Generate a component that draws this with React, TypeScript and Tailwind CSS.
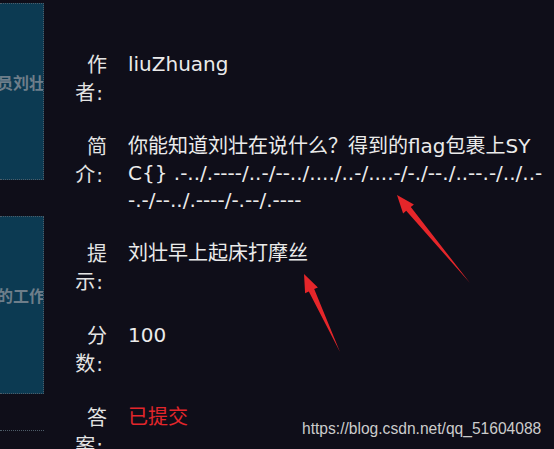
import React from 'react';

interface InfoRow {
  label: [string, string];
  lines: string[];
  danger?: boolean;
}

const rows: InfoRow[] = [
  { label: ['作', '者'], lines: ['liuZhuang'] },
  {
    label: ['简', '介'],
    lines: [
      '你能知道刘壮在说什么？得到的flag包裹上SY',
      'C{} .-../.----/..-/--../..../..-/....-/-./--./..--.-/../..-',
      '-.-/--../.----/-.--/.----',
    ],
  },
  { label: ['提', '示'], lines: ['刘壮早上起床打摩丝'] },
  { label: ['分', '数'], lines: ['100'] },
  { label: ['答', '案'], lines: ['已提交'], danger: true },
];

const SideCard = ({ title, className }: { title: string; className: string }) => (
  <div className={`overflow-hidden bg-[#0c3a52] border-t border-r border-b border-dotted border-[#4d5c68] ${className}`}>
    <div className="pt-[70px] -ml-[3px] whitespace-nowrap text-[16px] leading-[20px] font-bold text-[#6e7e8a]">
      {title}
    </div>
  </div>
);

export default function App() {
  return (
    <div
      className="relative w-[554px] h-[449px] overflow-hidden bg-[#0f0e19] flex"
      style={{ fontFamily: '"DejaVu Sans", "Noto Sans CJK SC", sans-serif' }}
    >
      {/* left list of challenge cards, clipped by the panel */}
      <div className="w-[44px] shrink-0 flex flex-col">
        <SideCard title="员刘壮的日记" className="mt-[3px] h-[177px]" />
        <SideCard title="的工作日志" className="mt-[36px] h-[178px]" />
        <div className="mt-[36px] flex-1 border-t border-dotted border-[#4d5c68]" />
      </div>

      {/* challenge detail */}
      <div className="flex-1 pl-[27px] pt-[51px]">
        <div className="grid grid-cols-[36px_1fr] gap-x-[21px] gap-y-[26px]">
          {rows.map((row) => (
            <React.Fragment key={row.label.join('')}>
              <div className="flex flex-col items-end text-[20px] leading-[28px] text-[#e4e4e4]">
                <span>{row.label[0]}</span>
                <span className="pr-[4px]">
                  {row.label[1]}
                  <span className="ml-[1px]">:</span>
                </span>
              </div>
              <div
                className={`flex flex-col text-[20px] leading-[27px] whitespace-nowrap ${
                  row.danger ? 'text-[#e3262b]' : 'text-[#ebebeb]'
                }`}
              >
                {row.lines.map((line) => (
                  <span key={line}>{line}</span>
                ))}
              </div>
            </React.Fragment>
          ))}
        </div>
      </div>

      {/* red annotation arrows */}
      <svg className="absolute inset-0 pointer-events-none" width="554" height="449" viewBox="0 0 554 449">
        <polygon
          fill="#e5262a"
          points="397,195 413.9,204.4 410.8,207 470,283 406.2,210.8 403.1,213.4"
        />
        <polygon
          fill="#e5262a"
          points="304,274 317.9,287.4 314.2,289 340,352 308.8,291.6 305.1,293.2"
        />
      </svg>

      {/* blog watermark */}
      <div
        className="absolute left-[302px] top-[421px] text-[15.6px] leading-none text-[#cccccc]"
        style={{ fontFamily: '"Liberation Sans", Arial, sans-serif' }}
      >
        https://blog.csdn.net/qq_51604088
      </div>
    </div>
  );
}
